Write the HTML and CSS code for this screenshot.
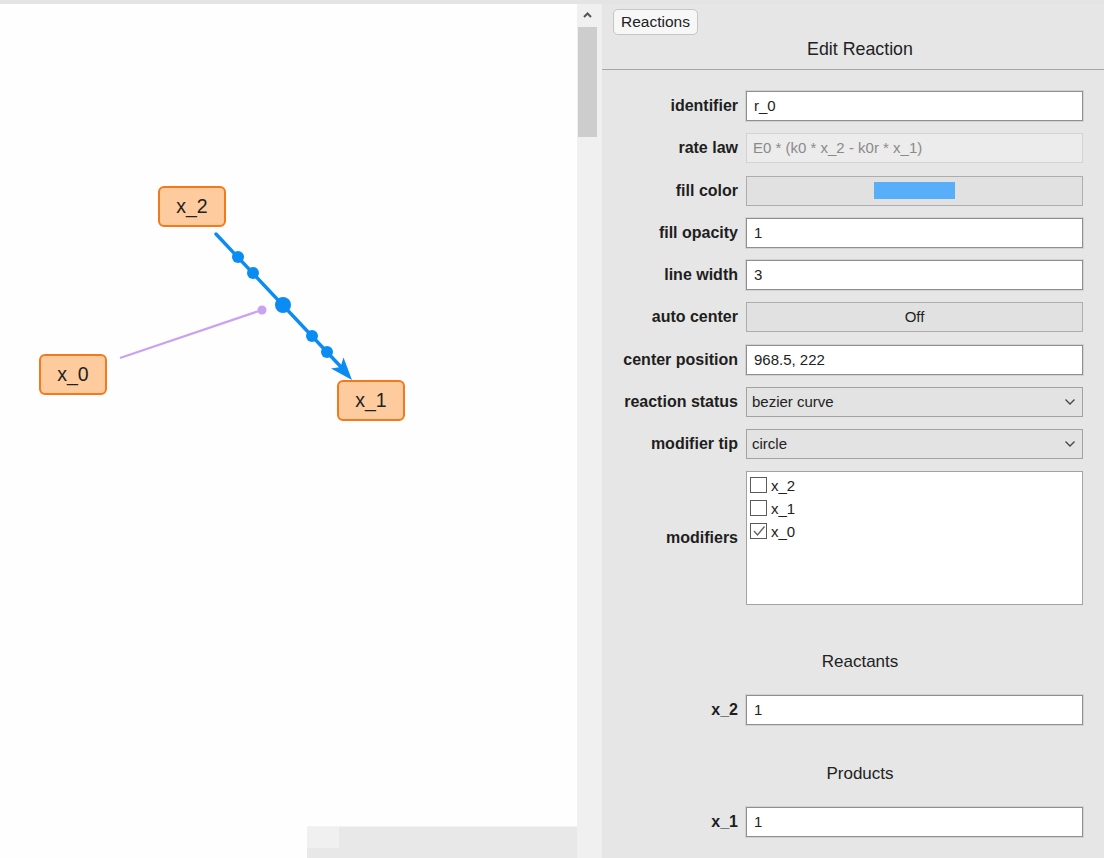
FILE: index.html
```html
<!DOCTYPE html>
<html>
<head>
<meta charset="utf-8">
<link rel="stylesheet" href="styles.css">
</head>
<body>
<div class="topbar"></div>
<div class="main">
  <div class="canvas">
    <svg class="edges" width="577" height="854" viewBox="0 4 577 854">
      <line x1="120" y1="358" x2="262" y2="310" stroke="#c9a2f2" stroke-width="2.2"/>
      <circle cx="262" cy="310" r="4.5" fill="#c9a2f2"/>
      <line x1="216" y1="234" x2="342" y2="368" stroke="#0a8cf2" stroke-width="3.4" stroke-linecap="round"/>
      <circle cx="238" cy="257" r="6" fill="#0a8cf2"/>
      <circle cx="253" cy="273" r="6" fill="#0a8cf2"/>
      <circle cx="283" cy="305" r="8" fill="#0a8cf2"/>
      <circle cx="312" cy="336" r="6" fill="#0a8cf2"/>
      <circle cx="327" cy="352" r="6" fill="#0a8cf2"/>
      <path d="M352 380 L331 368.5 L340.5 367 L343.5 357.5 Z" fill="#0a8cf2"/>
    </svg>
    <div class="node n2">x_2</div>
    <div class="node n0">x_0</div>
    <div class="node n1">x_1</div>
    <div class="hscroll"><div class="hcorner"></div></div>
  </div>
  <div class="vscroll">
    <div class="varrow">
      <svg width="21" height="23" viewBox="0 0 21 23"><path d="M7 13 L10.5 9.5 L14 13" fill="none" stroke="#555" stroke-width="2"/></svg>
    </div>
    <div class="vthumb"></div>
  </div>
  <div class="strip"></div>
  <div class="panel">
    <div class="tabs"><span class="tabbtn">Reactions</span></div>
    <div class="title">Edit Reaction</div>
    <div class="form">
      <label class="lbl">identifier</label>
      <div class="field input">r_0</div>

      <label class="lbl">rate law</label>
      <div class="field disabled">E0 * (k0 * x_2 - k0r * x_1)</div>

      <label class="lbl">fill color</label>
      <div class="field button"><span class="swatch"></span></div>

      <label class="lbl">fill opacity</label>
      <div class="field input">1</div>

      <label class="lbl">line width</label>
      <div class="field input">3</div>

      <label class="lbl">auto center</label>
      <div class="field button">Off</div>

      <label class="lbl">center position</label>
      <div class="field input">968.5, 222</div>

      <label class="lbl">reaction status</label>
      <div class="field select"><span>bezier curve</span><svg width="12" height="8" viewBox="0 0 12 8"><path d="M1.5 1.5 L6 6 L10.5 1.5" fill="none" stroke="#444" stroke-width="1.3"/></svg></div>

      <label class="lbl">modifier tip</label>
      <div class="field select"><span>circle</span><svg width="12" height="8" viewBox="0 0 12 8"><path d="M1.5 1.5 L6 6 L10.5 1.5" fill="none" stroke="#444" stroke-width="1.3"/></svg></div>

      <label class="lbl">modifiers</label>
      <div class="listbox">
        <div class="chk"><span class="box"></span>x_2</div>
        <div class="chk"><span class="box"></span>x_1</div>
        <div class="chk"><span class="box"><svg width="14" height="14" viewBox="0 0 14 14"><path d="M2 7 L5.5 11 L12.5 2.5" fill="none" stroke="#666" stroke-width="1.4"/></svg></span>x_0</div>
      </div>
    </div>
    <div class="section first">Reactants</div>
    <div class="form compact">
      <label class="lbl">x_2</label>
      <div class="field input">1</div>
    </div>
    <div class="section">Products</div>
    <div class="form compact">
      <label class="lbl">x_1</label>
      <div class="field input">1</div>
    </div>
  </div>
</div>
</body>
</html>
```

FILE: styles.css
```css
html, body {
  margin: 0;
  padding: 0;
}
body {
  width: 1104px;
  height: 858px;
  overflow: hidden;
  background: #ffffff;
  font-family: "Liberation Sans", Arial, sans-serif;
  color: #1e1e1e;
}
.topbar {
  height: 4px;
  background: #e4e4e4;
}
.main {
  display: flex;
  height: 854px;
}
.canvas {
  position: relative;
  width: 577px;
  height: 854px;
  background: #fefefe;
  overflow: hidden;
}
.edges {
  position: absolute;
  left: 0;
  top: 0;
}
.node {
  position: absolute;
  width: 68px;
  height: 41px;
  box-sizing: border-box;
  border: 2px solid #f27a1c;
  border-radius: 6px;
  background: #fdcb9d;
  font-size: 19.5px;
  line-height: 37px;
  text-align: center;
  color: #222;
}
.n2 { left: 158px; top: 182px; }
.n0 { left: 39px; top: 350px; }
.n1 { left: 337px; top: 376px; }
.hscroll {
  position: absolute;
  left: 307px;
  bottom: 0;
  width: 270px;
  height: 32px;
  background: #e8e8e8;
  border-top: 1px solid #f3f3f3;
  box-sizing: border-box;
}
.hcorner {
  width: 32px;
  height: 21px;
  background: #f0f0f0;
}
.vscroll {
  width: 21px;
  background: #f0f0f0;
  display: flex;
  flex-direction: column;
}
.varrow {
  height: 23px;
}
.vthumb {
  margin-left: 1px;
  width: 19px;
  height: 110px;
  background: #cdcdcd;
}
.strip {
  width: 4px;
  background: #f0f0f0;
}
.panel {
  flex: 1;
  background: #e6e6e6;
  display: flex;
  flex-direction: column;
}
.tabs {
  padding: 5px 0 0 11px;
  height: 26px;
}
.tabbtn {
  display: inline-block;
  box-sizing: border-box;
  height: 26px;
  padding: 0 7px;
  border: 1px solid #c6c6c6;
  border-radius: 5px;
  background: #f7f7f7;
  font-size: 15.5px;
  line-height: 24px;
  color: #222;
}
.title {
  margin-top: 4px;
  padding-left: 14px;
  padding-bottom: 9px;
  font-size: 17.8px;
  line-height: 21px;
  text-align: center;
  color: #222;
  border-bottom: 1px solid #a6a6a6;
}
.form {
  display: grid;
  grid-template-columns: 136px 337px;
  column-gap: 8px;
  row-gap: 12.3px;
  padding-top: 21px;
}
.form.compact {
  padding-top: 23px;
}
.lbl {
  justify-self: end;
  align-self: center;
  font-size: 16px;
  font-weight: bold;
  color: #1e1e1e;
  white-space: nowrap;
}
.field {
  box-sizing: border-box;
  height: 30px;
  font-size: 15px;
  line-height: 28px;
  white-space: nowrap;
}
.input {
  background: #ffffff;
  border: 1px solid #8f8f8f;
  box-shadow: 0 0 0 1px #d2d2d2;
  padding-left: 7px;
  color: #222;
}
.disabled {
  background: #ececec;
  border: 1px solid #d3d3d3;
  padding-left: 6px;
  color: #8a8a8a;
  font-size: 15px;
}
.button {
  background: #e1e1e1;
  border: 1px solid #adadad;
  text-align: center;
  color: #222;
  display: flex;
  align-items: center;
  justify-content: center;
}
.swatch {
  display: block;
  width: 81px;
  height: 17px;
  background: #58aef8;
}
.select {
  background: #e3e3e3;
  border: 1px solid #a2a2a2;
  padding: 0 6px 0 5px;
  display: flex;
  align-items: center;
  justify-content: space-between;
  color: #222;
}
.listbox {
  box-sizing: border-box;
  height: 134px;
  margin-top: -1px;
  background: #ffffff;
  border: 1px solid #a3a3a3;
  padding: 2px 3px;
}
.chk {
  display: flex;
  align-items: center;
  height: 23px;
  font-size: 15px;
  color: #222;
}
.box {
  box-sizing: border-box;
  width: 17px;
  height: 16px;
  border: 1.5px solid #5a5a5a;
  background: #fff;
  margin-right: 4px;
  display: flex;
  align-items: center;
  justify-content: center;
}
.box svg {
  display: block;
}
.section {
  margin-top: 39px;
  padding-left: 14px;
  font-size: 17px;
  line-height: 20px;
  text-align: center;
  color: #222;
}
.section.first {
  margin-top: 47px;
}
```
